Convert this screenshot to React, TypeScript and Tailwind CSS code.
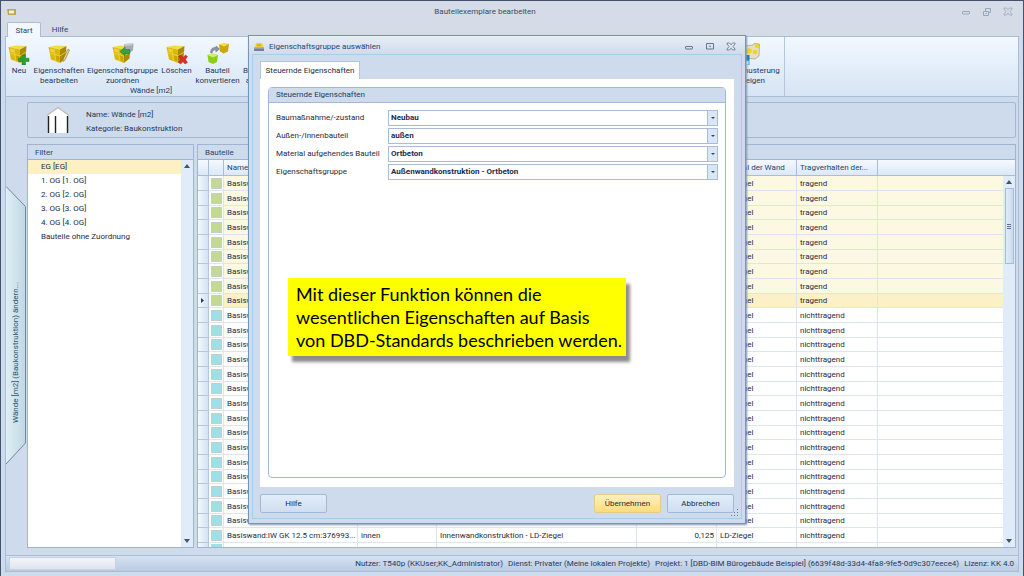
import React, { useState } from "react";
import clsx from "clsx";

interface WallRow {
  name: string;
  position: string;
  group: string;
  thickness: string;
  material: string;
  bearing: string;
  exterior: boolean;
}

const CURRENT_ROW = 8;

const rows: WallRow[] = Array.from({ length: 25 }, (_, i) => {
  const exterior = i <= CURRENT_ROW;
  return {
    name: "Basiswand:IW GK 12.5 cm:376993...",
    position: exterior ? "außen" : "innen",
    group: exterior
      ? "Außenwandkonstruktion - LD-Ziegel"
      : "Innenwandkonstruktion - LD-Ziegel",
    thickness: exterior ? "0,300" : "0,125",
    material: "LD-Ziegel",
    bearing: exterior ? "tragend" : "nichttragend",
    exterior,
  };
});

const filters = [
  "EG [EG]",
  "1. OG [1. OG]",
  "2. OG [2. OG]",
  "3. OG [3. OG]",
  "4. OG [4. OG]",
  "Bauteile ohne Zuordnung",
];

const fields = [
  { id: "massnahme", label: "Baumaßnahme/-zustand", options: ["Neubau"] },
  { id: "lage", label: "Außen-/Innenbauteil", options: ["außen", "innen"] },
  {
    id: "material",
    label: "Material aufgehendes Bauteil",
    options: ["Ortbeton", "LD-Ziegel"],
  },
  {
    id: "gruppe",
    label: "Eigenschaftsgruppe",
    options: ["Außenwandkonstruktion - Ortbeton"],
  },
];

function Cube() {
  return (
    <>
      <path d="M0.500 4 L8 2.500 L18.500 3 L12 6.500 Z" fill="#f3dc45" />
      <path d="M0.500 4 L12 6.500 L12 20 L3 16.500 Z" fill="#dcb80c" />
      <path d="M12 6.500 L18.500 3 L17.500 15.500 L12 20 Z" fill="#a88a06" />
      <path
        d="M1.500 10 L12 13 L18 9 M6 5.500 L7.500 18"
        stroke="#efd543"
        strokeWidth="0.8"
        fill="none"
      />
      <path d="M2 5.500 L5.500 6.300 L6 9.500 L3 9 Z" fill="#f0d63a" />
      <path d="M8 12.500 L11 13.500 L11 18 L8.500 17 Z" fill="#c8a408" />
    </>
  );
}

function RibbonIcon({ kind }: { kind: string }) {
  return (
    <svg viewBox="0 0 22 22" className="h-[22px] w-[22px]" aria-hidden="true">
      {kind !== "convert" && kind !== "sample" && <Cube />}
      {kind === "new" && (
        <path
          d="M14 12h3.500v3.200H21v3.300h-3.500V22H14v-3.500h-3.500v-3.300H14z"
          fill="#2f9e35"
          stroke="#1c7a27"
          strokeWidth="0.5"
        />
      )}
      {kind === "edit" && (
        <path
          d="M20 6 L21.500 7 L17 17 L15 18.500 L15.200 16 Z"
          fill="#ead58a"
          stroke="#8f7430"
          strokeWidth="0.6"
        />
      )}
      {kind === "assign" && (
        <>
          <path d="M12 1 L21.500 0.500 L21 7.500 L17 10 L12 8 Z" fill="#a6abb2" />
          <path d="M12 1 L21.500 0.500 L19 2.500 L13 3 Z" fill="#c9cdd2" />
          <path
            d="M8 8.500 L13 4 L13 6.500 L18 6.500 L18 10.500 L13 10.500 L13 13 Z"
            fill="#36a142"
            stroke="#1d7a2a"
            strokeWidth="0.5"
          />
        </>
      )}
      {kind === "delete" && (
        <path
          d="M12.500 13 L15 12 L17 14.500 L19.500 12 L21.500 13.500 L19.500 16.500 L21.500 19.500 L19 21 L17 18.800 L14.500 21 L12.500 19.500 L14.500 16.500 Z"
          fill="#d93027"
          stroke="#a91c17"
          strokeWidth="0.4"
        />
      )}
      {kind === "convert" && (
        <>
          <path d="M12 1.500 L17 0.500 L22 1 L21 8.500 L16.500 10.500 L13 8.500 Z" fill="#cda60c" />
          <path d="M12 1.500 L17 0.500 L22 1 L17 3.500 Z" fill="#f4dd45" />
          <path d="M0.500 12 L5 10.500 L11 12 L10 19 L6 21 L1.500 19 Z" fill="#8bcf1c" />
          <path d="M0.500 12 L5 10.500 L11 12 L6 14.500 Z" fill="#d7ef6b" />
          <path
            d="M3.500 9.500 C3.500 6 6 4 9 4.500 L9 3 L12.500 6 L8.800 9 L9 6.800 C6.500 6.500 5.500 8 5 10 Z"
            fill="#8d93a8"
            stroke="#636a86"
            strokeWidth="0.5"
          />
        </>
      )}
      {kind === "sample" && (
        <>
          <path
            d="M7 3 L15 2 L16 0.500 L21.500 1 L21 13 L17 16 L7 15 Z"
            fill="#e8dfc2"
            stroke="#a99f7f"
            strokeWidth="0.7"
          />
          <circle cx="11" cy="8" r="2.800" fill="#ecd61f" />
          <circle cx="17" cy="9" r="2.300" fill="#ecd61f" />
          <circle cx="19" cy="2.800" r="2.200" fill="#ecd61f" />
          <path d="M3 12h8.500v5H3z" fill="#1576b8" />
          <path d="M3 17h8.500v5H3z" fill="#2a9fd0" />
          <path d="M5 19l5.500-1v3.500H6z" fill="#e6f7fc" />
        </>
      )}
    </svg>
  );
}

interface RibbonButtonProps {
  kind: string;
  lines: string[];
  className: string;
}

function RibbonButton({ kind, lines, className }: RibbonButtonProps) {
  return (
    <button
      type="button"
      className={clsx(
        "flex shrink-0 flex-col items-center whitespace-nowrap text-center leading-[10px]",
        className
      )}
    >
      <RibbonIcon kind={kind} />
      <span className="mt-px">{lines[0]}</span>
      {lines[1] && <span>{lines[1]}</span>}
    </button>
  );
}

function WindowButtons({ restored, className }: { restored?: boolean; className: string }) {
  return (
    <div className={clsx("flex items-center gap-[11px]", className)}>
      <button type="button" aria-label="Minimieren">
        <svg viewBox="0 0 10 10" className="h-[10px] w-[10px]" fill="none" stroke="currentColor">
          <rect x="1.500" y="4.500" width="7" height="2.500" rx="0.500" />
        </svg>
      </button>
      <button type="button" aria-label="Maximieren">
        <svg viewBox="0 0 10 10" className="h-[10px] w-[10px]" fill="none" stroke="currentColor">
          {restored ? (
            <path d="M1.500 4.500h5v4h-5z M3.500 4V1.500h5v4H7 M3.500 6.500h1.500" />
          ) : (
            <path d="M1.500 1.500h7v5.500h-7z M4 4.200h2" />
          )}
        </svg>
      </button>
      <button type="button" aria-label="Schließen">
        <svg viewBox="0 0 10 10" className="h-[10px] w-[10px]" fill="none" stroke="currentColor" strokeWidth="0.8">
          <path d="M1 1h2.500L5 2.800l1.500-1.800H9v1L7 4.500l2 2.500v1H6.500L5 6.200 3.500 8H1v-1L3 4.500 1 2z" />
        </svg>
      </button>
    </div>
  );
}

function Arrow({ up }: { up?: boolean }) {
  return (
    <svg viewBox="0 0 6 4" className="h-1 w-1.5" aria-hidden="true">
      <path d={up ? "M0 4 L3 0 L6 4Z" : "M0 0 L3 4 L6 0Z"} fill="#42536f" />
    </svg>
  );
}

function SideTab() {
  return (
    <button
      type="button"
      className="relative mt-[89px] flex h-[279px] w-5 items-end justify-center pb-[42px] text-[#2b5265]"
    >
      <svg viewBox="0 0 20 279" className="absolute inset-0 h-full w-full" aria-hidden="true">
        <defs>
          <linearGradient id="tabFill">
            <stop offset="0" stopColor="#e0eff3" />
            <stop offset="1" stopColor="#bed7e6" />
          </linearGradient>
        </defs>
        <path d="M0 0.500 L19.500 20.500 V257 L0 278Z" fill="url(#tabFill)" />
        <path d="M0 0.500 L19.500 20.500 V257 L0 278" fill="none" stroke="#7486a0" />
      </svg>
      <span className="relative rotate-180 whitespace-nowrap leading-[10px] [writing-mode:vertical-rl]">
        Wände [m2] (Baukonstruktion) ändern...
      </span>
    </button>
  );
}

function FilterPanel() {
  const [active, setActive] = useState(0);
  return (
    <section className="flex w-[167px] shrink-0 flex-col border border-[#9fb4d0] bg-[#cddbec]">
      <h2 className="h-[14px] pl-[7px] leading-4 text-[#2c456b]">Filter</h2>
      <div className="flex flex-1 border-t border-[#9fb4d0] bg-white">
        <ul className="flex-1">
          {filters.map((filter, i) => (
            <li key={filter}>
              <button
                type="button"
                onClick={() => setActive(i)}
                className={clsx(
                  "block h-[14px] w-full pl-[13px] text-left leading-[14px]",
                  i === active && "bg-[#fdf0c4]"
                )}
              >
                {filter}
              </button>
            </li>
          ))}
        </ul>
        <div className="flex w-3 flex-col items-center justify-between bg-[#e1ecfa] py-1">
          <Arrow up />
          <Arrow />
        </div>
      </div>
    </section>
  );
}

function PartsTable() {
  return (
    <section className="flex min-w-0 flex-1 flex-col border border-[#9fb4d0] bg-[#cddbec]">
      <h2 className="h-[14px] pl-[7px] leading-4 text-[#2c456b]">Bauteile</h2>
      <div className="flex flex-1 items-start overflow-hidden border-t border-[#9fb4d0] bg-white">
        <table className="w-full min-w-0 table-fixed border-separate border-spacing-0 whitespace-nowrap">
          <colgroup>
            <col className="w-[11px]" />
            <col className="w-[15px]" />
            <col className="w-[134px]" />
            <col className="w-[79px]" />
            <col className="w-[200px]" />
            <col className="w-[80px]" />
            <col className="w-[80px]" />
            <col className="w-[81px]" />
            <col />
          </colgroup>
          <thead>
            <tr className="h-4 bg-linear-to-b from-[#f5f9fe] to-[#dbe7f6] text-left text-[#24456f] [&>th]:overflow-hidden [&>th]:border-r [&>th]:border-b [&>th]:border-[#a9bdd8] [&>th]:p-0 [&>th]:font-normal [&>th]:leading-[15px]">
              <th />
              <th />
              <th><span className="pl-[3px]">Name</span></th>
              <th><span className="pl-[3px]">Außen-/Innenbauteil</span></th>
              <th><span className="pl-[3px]">Eigenschaftsgruppe</span></th>
              <th><span className="pl-[3px]">Dicke</span></th>
              <th><span className="pl-[3px]">Material der Wand</span></th>
              <th><span className="pl-[3px]">Tragverhalten der...</span></th>
              <th className="border-r-0!" />
            </tr>
          </thead>
          <tbody>
            {rows.map((row, i) => (
              <tr
                key={i}
                className={clsx(
                  "[&>td]:overflow-hidden [&>td]:border-r [&>td]:border-b [&>td]:border-[#dbe5f0] [&>td]:py-0 [&>td]:pr-0 [&>td]:pl-[3px] [&>td]:leading-[13px]",
                  i % 3 === 2 ? "h-[14px]" : "h-[15px]",
                  i === CURRENT_ROW && "bg-[#fcf0c6]",
                  i < CURRENT_ROW && "bg-[#fdf8e2]"
                )}
              >
                <td className="border-[#b4c6de]! bg-linear-to-r from-[#f3f8fe] to-[#d5e2f3]">
                  {i === CURRENT_ROW && (
                    <svg viewBox="0 0 3 5" className="h-[5px] w-[3px]">
                      <path d="M0 0 L3 2.500 L0 5Z" fill="#26395c" />
                    </svg>
                  )}
                </td>
                <td className="bg-white pl-[2px]!">
                  <div
                    className={clsx(
                      "h-[11px] w-[11px] border border-[#c5cfc8]",
                      row.exterior ? "bg-[#c2da92]" : "bg-[#9fdfe6]"
                    )}
                  />
                </td>
                <td>{row.name}</td>
                <td>{row.position}</td>
                <td>{row.group}</td>
                <td className="pr-[2px]! text-right">{row.thickness}</td>
                <td>{row.material}</td>
                <td>{row.bearing}</td>
                <td className="border-r-0!" />
              </tr>
            ))}
            {/* top edge of the next row, cut by the viewport */}
            <tr className="h-1 [&>td]:border-r [&>td]:border-[#dbe5f0] [&>td]:p-0">
              <td className="border-[#b4c6de]! bg-linear-to-r from-[#f3f8fe] to-[#d5e2f3]" />
              <td className="pt-px! pl-[2px]!">
                <div className="h-[3px] w-[11px] bg-[#9fdfe6]" />
              </td>
              <td />
              <td />
              <td />
              <td />
              <td />
              <td />
              <td className="border-r-0!" />
            </tr>
          </tbody>
        </table>
        <div className="flex w-3 shrink-0 flex-col self-stretch">
          <div className="h-4 border-b border-[#a9bdd8] bg-linear-to-b from-[#f5f9fe] to-[#dbe7f6]" />
          <div className="flex flex-1 flex-col items-center bg-[#e1ecfa] py-1">
            <Arrow up />
            <div className="mt-1 flex h-[76px] w-[9px] flex-col items-center justify-center gap-px border border-[#a5bad6] bg-linear-to-r from-[#e3edf9] to-[#c9d9ee]">
              <i className="h-px w-1 bg-[#5d7192]" />
              <i className="h-px w-1 bg-[#5d7192]" />
              <i className="h-px w-1 bg-[#5d7192]" />
            </div>
            <div className="mt-auto">
              <Arrow />
            </div>
          </div>
        </div>
      </div>
    </section>
  );
}

function GroupDialog() {
  return (
    <div
      role="dialog"
      aria-labelledby="dialog-title"
      className="absolute top-[34px] left-[247px] flex h-[489px] w-[498px] flex-col border border-[#7d92b1] bg-[#cddbec] px-[3px] pb-1 shadow-[1px_1px_2px_#8496b0]"
    >
      <header className="-mx-[3px] flex h-[18px] items-center bg-linear-to-b from-[#e8eef6] to-[#cfdcec] pr-[9px] pl-1 pt-1">
        <svg viewBox="0 0 12 10" className="h-[10px] w-3" aria-hidden="true">
          <path d="M3 1h6l2 5H2z" fill="#ecd437" />
          <path d="M4 2.500h4v1.500H4z" fill="#c9ad1c" />
          <path d="M1 5.500h10v3.500H1z" fill="#77809a" />
          <path d="M1 5.500h10v1H1z" fill="#b3bccb" />
        </svg>
        <h1 id="dialog-title" className="ml-1 text-[#2c456b]">
          Eigenschaftsgruppe auswählen
        </h1>
        <WindowButtons className="ml-auto text-[#66758d]" />
      </header>
      <div className="flex flex-1 flex-col border border-[#a6cdea] px-[7px] pt-[6px] pb-[5px]">
        <div role="tablist" className="flex">
          <button
            type="button"
            role="tab"
            aria-selected="true"
            className="h-[18px] w-[100px] border border-b-0 border-[#b5c6db] bg-white leading-[18px]"
          >
            Steuernde Eigenschaften
          </button>
        </div>
        <div className="flex flex-1 flex-col bg-white px-2 pt-2 pb-[9px]">
          <fieldset className="flex flex-1 flex-col rounded-sm border border-[#a3b8d4]">
            <h2 className="h-[15px] border-b border-[#a3b8d4] bg-[#cddbec] pl-[7px] leading-[14px] text-[#24395c]">
              Steuernde Eigenschaften
            </h2>
            <div className="grid gap-[2px] px-[7px] pt-[7px]">
              {fields.map((field) => (
                <div key={field.id} className="flex h-4 items-center">
                  <label htmlFor={field.id} className="w-[112px] shrink-0 whitespace-nowrap">
                    {field.label}
                  </label>
                  <div className="relative h-4 flex-1">
                    <select
                      id={field.id}
                      className="block h-4 w-full appearance-none border border-[#a9bdd8] bg-white pl-[2px] leading-[14px] font-bold text-[#1a2b50]"
                    >
                      {field.options.map((option) => (
                        <option key={option}>{option}</option>
                      ))}
                    </select>
                    <span className="pointer-events-none absolute inset-y-0 right-0 flex w-[11px] items-center justify-center border border-[#a9bdd8] bg-[#d9e6f6]">
                      <svg viewBox="0 0 4 2" className="h-[2px] w-1">
                        <path d="M0 0h4L2 2z" fill="#33476a" />
                      </svg>
                    </span>
                  </div>
                </div>
              ))}
            </div>
          </fieldset>
        </div>
        <footer className="flex gap-[6px] pt-[7px] [&>button]:h-[19px] [&>button]:w-[67px] [&>button]:rounded-xs [&>button]:border">
          <button
            type="button"
            className="mr-auto border-[#a3b8d4] bg-linear-to-b from-[#e1edfa] to-[#cfdef0]"
          >
            Hilfe
          </button>
          <button
            type="button"
            className="border-[#e2cd8d] bg-linear-to-b from-[#fdf0bf] to-[#fcdc76]"
          >
            Übernehmen
          </button>
          <button
            type="button"
            className="border-[#a3b8d4] bg-linear-to-b from-[#e1edfa] to-[#cfdef0]"
          >
            Abbrechen
          </button>
        </footer>
      </div>
      <svg viewBox="0 0 8 8" className="absolute right-[6px] bottom-[6px] h-2 w-2" aria-hidden="true">
        <path
          d="M6 0h1v1h-1z M3 3h1v1h-1z M6 3h1v1h-1z M0 6h1v1h-1z M3 6h1v1h-1z M6 6h1v1h-1z"
          fill="#5f7494"
        />
      </svg>
    </div>
  );
}

export default function App() {
  return (
    <div className="relative flex min-h-screen flex-col overflow-hidden border border-[#44536d] bg-[#cddbec] font-['Roboto','Noto_Sans',sans-serif] text-[8px] leading-[10px] text-[#1f2b3d]">
      <header className="flex h-[21px] items-center bg-[#d5dce8] pr-[10px] pl-[6px] pt-px">
        <svg viewBox="0 0 10 10" className="h-[10px] w-[10px]" aria-hidden="true">
          <path d="M0 2h9v6H1z" fill="#bba84c" />
          <path d="M2 3.500h5v3H2z" fill="#f4efd8" />
        </svg>
        <h1 className="flex-1 pr-2 text-center text-[#3c4b63]">Bauteilexemplare bearbeiten</h1>
        <WindowButtons restored className="text-[#98a6ba]" />
      </header>
      <nav className="flex h-[14px] bg-[#d5dce8] pl-[6px]">
        <button
          type="button"
          className="relative z-10 h-[15px] w-[34px] rounded-t-xs border border-b-0 border-[#a9bdd8] bg-[#f3f8fe] pt-px text-[#24456f]"
        >
          Start
        </button>
        <button type="button" className="w-[38px] pt-[2px] text-[#24456f]">
          Hilfe
        </button>
      </nav>
      <div className="mx-1 flex h-[61px] border border-[#a9bdd8] bg-linear-to-b from-[#f2f8ff] to-[#d6e4f4] text-[#24395c]">
        <div className="flex w-[290px] shrink-0 flex-col">
          <div className="flex h-[49px] gap-px pt-[6px]">
            <RibbonButton kind="new" lines={["Neu"]} className="w-[26px]" />
            <RibbonButton kind="edit" lines={["Eigenschaften", "bearbeiten"]} className="w-[52px]" />
            <RibbonButton kind="assign" lines={["Eigenschaftsgruppe", "zuordnen"]} className="w-[73px]" />
            <RibbonButton kind="delete" lines={["Löschen"]} className="w-[33px]" />
            <RibbonButton kind="convert" lines={["Bauteil", "konvertieren"]} className="w-[47px]" />
            <RibbonButton kind="edit" lines={["Bauteiltypen", "auswählen"]} className="w-[46px]" />
          </div>
          <div className="text-center">Wände [m2]</div>
        </div>
        <div className="flex w-[489px] shrink-0 justify-end border-r border-[#b4c6de] pt-[6px]">
          <RibbonButton kind="sample" lines={["Neubemusterung", "anzeigen"]} className="w-[70px]" />
        </div>
      </div>
      <main className="mx-1 flex flex-1 border-x border-[#a9bdd8]">
        <div className="w-[21px] shrink-0">
          <SideTab />
        </div>
        <div className="flex min-w-0 flex-1 flex-col gap-[6px] pt-[5px] pr-[2px] pb-[7px]">
          <section className="flex h-[36px] items-center rounded-xs border border-[#a3b8d4] pl-[18px]">
            <svg viewBox="0 0 24 28" className="h-7 w-6" aria-hidden="true">
              <path d="M2 9h20v18H2z" fill="#fff" />
              <path d="M1 9.500 L12 1.500 L23 9.500Z" fill="#fff" />
              <path d="M1 9.500 L12 1.500 L23 9.500" fill="none" stroke="#b9b9b9" strokeWidth="1.200" />
              <path d="M2.500 10v17 M9.500 10v17 M21.500 10v17" stroke="#222" strokeWidth="1.400" />
            </svg>
            <div className="ml-4 grid gap-1 pt-[3px] text-[#24395c]">
              <p>Name: Wände [m2]</p>
              <p>Kategorie: Baukonstruktion</p>
            </div>
          </section>
          <div className="flex flex-1 gap-[3px]">
            <FilterPanel />
            <PartsTable />
          </div>
        </div>
      </main>
      <footer className="mx-1 mb-1 flex h-[17px] items-center border border-[#a9bdd8] bg-linear-to-b from-[#d5e1f0] to-[#b9cbe3] pr-1 pl-[3px] text-[#24395c]">
        <div className="h-[13px] w-[107px] border border-[#c9d2df] bg-linear-to-b from-[#f2f4f8] to-[#dfe5ee]" />
        <p className="ml-auto flex gap-[5px] whitespace-nowrap">
          <span>Nutzer: T540p (KKUser;KK_Administrator)</span>
          <span>Dienst: Privater (Meine lokalen Projekte)</span>
          <span>Projekt: 1 [DBD-BIM Bürogebäude Beispiel] (6639f48d-33d4-4fa8-9fe5-0d9c307eece4)</span>
          <span>Lizenz: KK 4.0</span>
        </p>
      </footer>
      <GroupDialog />
      <aside className="absolute top-[277px] left-[287px] h-[78px] w-[338px] bg-[#ffff00] py-[5px] pl-2 font-['Lato',sans-serif] text-[18px] leading-[23px] whitespace-nowrap text-black shadow-[4px_6px_3px_#8d8d8d]">
        <p>Mit dieser Funktion können die</p>
        <p>wesentlichen Eigenschaften auf Basis</p>
        <p>von DBD-Standards beschrieben werden.</p>
      </aside>
    </div>
  );
}
